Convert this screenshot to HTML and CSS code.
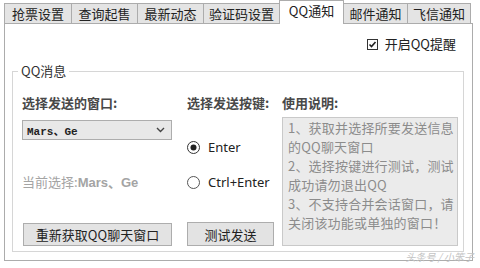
FILE: index.html
```html
<!DOCTYPE html>
<html lang="zh-CN">
<head>
    <meta charset="UTF-8">
    <meta name="viewport" content="width=device-width, initial-scale=1.0">
    <link rel="stylesheet" href="styles.css">
</head>
<body>

<div id="settings-window">
    <div class="tabs">
        <div class="tab tab-w67">抢票设置</div>
        <div class="tab tab-w66">查询起售</div>
        <div class="tab tab-w66">最新动态</div>
        <div class="tab tab-w76">验证码设置</div>
        <div class="tab tab-w64 active">QQ通知</div>
        <div class="tab tab-w64">邮件通知</div>
        <div class="tab tab-w63">飞信通知</div>
    </div>

    <div class="panel">
        <div class="enable-row">
            <label class="check">
                <svg width="11" height="11" viewBox="0 0 11 11">
                    <rect x="0.5" y="0.5" width="10" height="10" fill="#fff" stroke="#333"/>
                    <path d="M2.5 5.5 L4.5 7.5 L8.5 3" fill="none" stroke="#222" stroke-width="1.6"/>
                </svg>
                <span>开启QQ提醒</span>
            </label>
        </div>

        <fieldset class="group">
            <legend>QQ消息</legend>
            <div class="group-grid">
                <div class="col col-window">
                    <div class="field-label">选择发送的窗口:</div>
                    <div class="select">
                        <span class="select-text">Mars、Ge</span>
                        <svg width="9" height="6" viewBox="0 0 9 6">
                            <path d="M1 1 L4.5 4.5 L8 1" fill="none" stroke="#444" stroke-width="1.4"/>
                        </svg>
                    </div>
                    <div class="current">当前选择:<b>Mars、Ge</b></div>
                    <div class="button btn-wide">重新获取QQ聊天窗口</div>
                </div>

                <div class="col col-key">
                    <div class="field-label">选择发送按键:</div>
                    <div class="radio radio-first">
                        <svg width="13" height="13" viewBox="0 0 13 13">
                            <circle cx="6.5" cy="6.5" r="6" fill="#fff" stroke="#333"/>
                            <circle cx="6.5" cy="6.5" r="3" fill="#222"/>
                        </svg>
                        <span>Enter</span>
                    </div>
                    <div class="radio radio-second">
                        <svg width="13" height="13" viewBox="0 0 13 13">
                            <circle cx="6.5" cy="6.5" r="6" fill="#fff" stroke="#555"/>
                        </svg>
                        <span>Ctrl+Enter</span>
                    </div>
                    <div class="button btn-test">测试发送</div>
                </div>

                <div class="col col-help">
                    <div class="field-label">使用说明:</div>
                    <div class="help-box">
                        1、获取并选择所要发送信息<br>
                        的QQ聊天窗口<br>
                        2、选择按键进行测试，测试<br>
                        成功请勿退出QQ<br>
                        3、不支持合并会话窗口，请<br>
                        关闭该功能或单独的窗口！
                    </div>
                </div>
            </div>
        </fieldset>
    </div>

    <div class="watermark">头条号 / 小笨子</div>
</div>

</body>
</html>
```

FILE: styles.css
```css
body {
    margin: 0;
    background: #ffffff;
    font-family: "Noto Sans CJK SC", "Noto Sans", sans-serif;
    color: #222;
}

#settings-window {
    width: 480px;
    height: 268px;
    position: relative;
    overflow: hidden;
}

/* tab strip */
.tabs {
    display: flex;
    align-items: flex-end;
    height: 23px;
    padding-left: 4px;
}

.tab {
    box-sizing: border-box;
    height: 20px;
    display: flex;
    align-items: center;
    justify-content: center;
    background: #e4e4e4;
    border: 1px solid #acacac;
    border-bottom: none;
    font-size: 13px;
    line-height: 16px;
    color: #222;
}

.tab + .tab {
    margin-left: -1px;
}

.tab-w63 { width: 64px; }
.tab-w64 { width: 65px; }
.tab-w66 { width: 67px; }
.tab-w67 { width: 68px; }
.tab-w76 { width: 77px; }

.tab.active {
    height: 24px;
    margin-bottom: -1px;
    background: #ffffff;
    padding-bottom: 3px;
    position: relative;
    z-index: 1;
}

/* panel */
.panel {
    box-sizing: border-box;
    width: 469px;
    height: 238px;
    margin-left: 4px;
    border: 1px solid #acacac;
    background: #fff;
}

.enable-row {
    display: flex;
    justify-content: flex-end;
    margin-top: 12px;
    padding-right: 16px;
}

.check {
    display: flex;
    align-items: center;
    gap: 7px;
    font-size: 13px;
    line-height: 16px;
    color: #222;
}

.group {
    box-sizing: border-box;
    width: 452px;
    margin: 11px 0 0 7px;
    padding: 16px 5px 5px 9px;
    border: 1px solid #d6d6d6;
}

.group legend {
    margin-left: -4px;
    padding: 0 3px;
    font-size: 13px;
    line-height: 16px;
    color: #333;
}

.group-grid {
    display: grid;
    grid-template-columns: 165px 95px 176px;
}

.col {
    display: flex;
    flex-direction: column;
}

.field-label {
    font-size: 13px;
    line-height: 16px;
    font-weight: 700;
    color: #484848;
    white-space: nowrap;
}

.select {
    box-sizing: border-box;
    width: 150px;
    height: 20px;
    margin-top: 9px;
    display: flex;
    align-items: center;
    justify-content: space-between;
    padding: 0 6px 0 4px;
    background: #e8e8e8;
    border: 1px solid #adadad;
}

.select-text {
    font-family: "Liberation Mono", "Noto Sans CJK SC", monospace;
    font-size: 11px;
    font-weight: 700;
    color: #222;
}

.current {
    margin-top: 34px;
    font-size: 13px;
    line-height: 16px;
    color: #a4a4a4;
    white-space: nowrap;
}

.current b {
    font-family: "Liberation Sans", "Noto Sans CJK SC", sans-serif;
    font-size: 13px;
}

.button {
    box-sizing: border-box;
    margin-top: auto;
    display: flex;
    align-items: center;
    justify-content: center;
    background: #e3e3e3;
    border: 1px solid #adadad;
    font-size: 13px;
    color: #222;
}

.btn-wide {
    width: 149px;
    height: 23px;
    margin-left: 1px;
}

.btn-test {
    width: 87px;
    height: 24px;
}

.radio {
    display: flex;
    align-items: center;
    gap: 8px;
    height: 16px;
    font-family: "Noto Sans", sans-serif;
    font-size: 13px;
    color: #222;
    white-space: nowrap;
}

.radio-first {
    margin-top: 28px;
}

.radio-second {
    margin-top: 19px;
}

.help-box {
    box-sizing: border-box;
    height: 129px;
    margin-top: 6px;
    padding: 0 5px;
    background: #ebebeb;
    border: 1px solid #c9c9c9;
    font-size: 13px;
    line-height: 19px;
    letter-spacing: 0.2px;
    color: #8c8c8c;
    white-space: nowrap;
}

.watermark {
    position: absolute;
    right: 6px;
    bottom: 5px;
    font-size: 10px;
    line-height: 12px;
    color: #c4c4c4;
    font-style: italic;
}
```
